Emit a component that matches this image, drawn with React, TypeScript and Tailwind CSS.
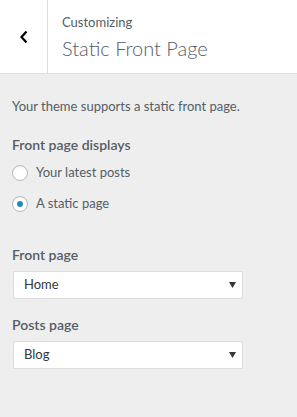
const font = { fontFamily: 'Lato, "Open Sans", sans-serif' };

const Radio = ({ label, checked }: { label: string; checked?: boolean }) => (
  <label className="flex items-center gap-2 h-4">
    <span className="w-4 h-4 rounded-full bg-white border border-[#b4b9be] shadow-[inset_0_1px_2px_rgba(0,0,0,0.07)] flex items-center justify-center">
      {checked && <span className="w-[6px] h-[6px] rounded-full bg-[#1e8cbe]" />}
    </span>
    <span className="text-[13px] text-[#555d66]">{label}</span>
  </label>
);

const Select = ({ value }: { value: string }) => (
  <div className="w-[230px] h-[28px] bg-white border border-[#dddddd] flex items-center justify-between pl-[10px] pr-[6px]">
    <span className="text-[13px] text-[#32373c]">{value}</span>
    <svg width="7" height="6" viewBox="0 0 7 6">
      <path d="M0 0H7L3.5 6Z" fill="#32373c" />
    </svg>
  </div>
);

export default function App() {
  return (
    <div className="w-[297px] h-[417px] bg-[#eeeeee]" style={font}>
      <div className="flex h-[74px] bg-white border-b border-[#dddddd]">
        <div className="w-[48px] flex items-center justify-center border-r border-[#dddddd]">
          <svg width="10" height="14" viewBox="0 0 10 14" className="ml-[1px]">
            <path d="M7.5 1.5L2.5 7L7.5 12.5" fill="none" stroke="#000" strokeWidth="2.2" />
          </svg>
        </div>
        <div className="pl-[14px] pt-[13px]">
          <div className="text-[13px] leading-[18px] text-[#555d66]">Customizing</div>
          <div className="text-[20px] leading-[26px] font-light text-[#555d66] mt-[4px]">Static Front Page</div>
        </div>
      </div>
      <div className="px-3 pt-[23px]">
        <p className="text-[13px] leading-[18px] text-[#555d66]">Your theme supports a static front page.</p>
        <div className="mt-[20px] text-[14px] leading-[20px] font-semibold text-[#555d66]">Front page displays</div>
        <div className="mt-[10px] flex flex-col gap-[15px]">
          <Radio label="Your latest posts" />
          <Radio label="A static page" checked />
        </div>
        <div className="mt-[33px] text-[14px] leading-[20px] font-semibold text-[#555d66]">Front page</div>
        <div className="mt-[6px] pl-px">
          <Select value="Home" />
        </div>
        <div className="mt-[16px] text-[14px] leading-[20px] font-semibold text-[#555d66]">Posts page</div>
        <div className="mt-[6px] pl-px">
          <Select value="Blog" />
        </div>
      </div>
    </div>
  );
}
